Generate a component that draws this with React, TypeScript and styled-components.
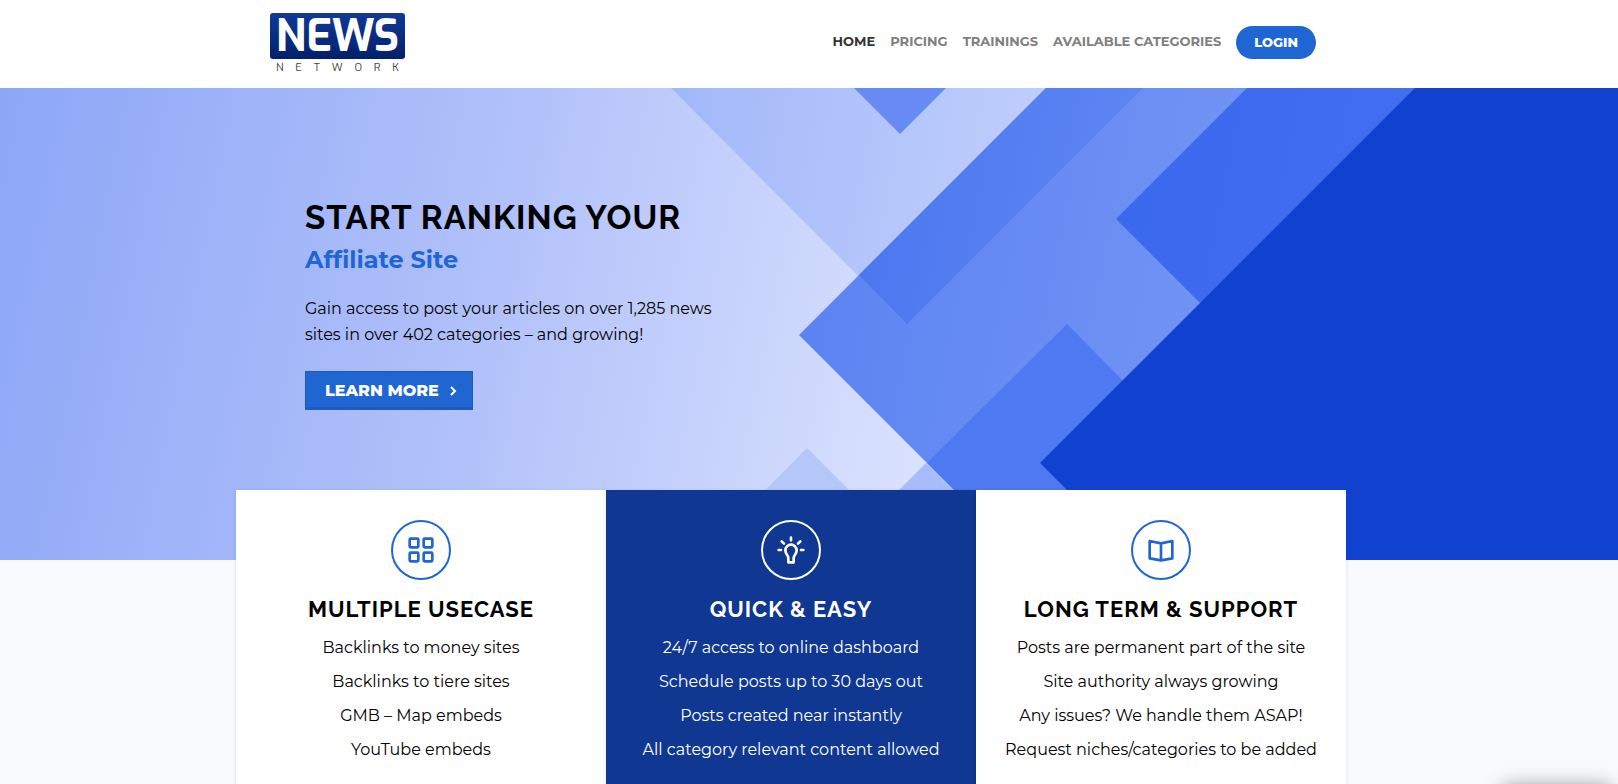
import React from 'react';
import styled, { createGlobalStyle, css } from 'styled-components';

const blue = '#2066d3';
const navy = '#103792';
const textFont = 'Montserrat, Inter, "Open Sans", sans-serif';
const titleFont = 'Raleway, Lato, "Open Sans", sans-serif';
const logoFont = 'Exo, "Open Sans", sans-serif';

const GlobalStyle = createGlobalStyle`
  *, *::before, *::after { box-sizing: border-box; }
  body {
    margin: 0;
    background: #f9fafc;
    color: #000;
    font-family: ${textFont};
    font-size: 16px;
    line-height: 26px;
  }
  h1, h2, p, ul { margin: 0; padding: 0; font-weight: inherit; }
  ul { list-style: none; }
  a { color: inherit; text-decoration: none; }
`;

const Header = styled.header`
  background: #fff;
  padding-right: 36px;
`;

const HeaderInner = styled.div`
  display: flex;
  align-items: center;
  justify-content: space-between;
  max-width: 1082px;
  height: 88px;
  margin: 0 auto;
  padding: 0 16px 4px 20px;
`;

const LogoLink = styled.a`
  display: block;
  width: 135px;
  padding-top: 4px;
  font-family: ${logoFont};
  text-align: center;
`;

const LogoPlate = styled.span`
  display: block;
  height: 46px;
  border-radius: 3px;
  background: linear-gradient(#103a97, #02206a);
  color: #fff;
  font-size: 43px;
  line-height: 48px;
  font-weight: 700;
`;

const LogoCaption = styled.span`
  display: flex;
  justify-content: space-between;
  padding: 2px 6px 0;
  color: #444;
  font-size: 11px;
  line-height: 14px;
`;

const NavList = styled.ul`
  display: flex;
  align-items: center;
  gap: 15px;
  font-size: 13px;
  line-height: 20px;
  font-weight: 700;
`;

const NavLink = styled.a<{ $active?: boolean }>`
  display: block;
  padding-bottom: 2px;
  color: ${p => (p.$active ? '#333' : '#808080')};
`;

const LoginButton = styled.button`
  display: block;
  height: 33px;
  padding: 0 18px;
  border: 0;
  border-radius: 17px;
  background: ${blue};
  color: #fff;
  font: 800 13px/33px ${textFont};
  cursor: pointer;
`;

const Hero = styled.section`
  position: relative;
  height: 472px;
  padding: 110px 36px 0 0;
  overflow: hidden;
`;

const HeroBackdrop = styled.svg`
  position: absolute;
  inset: 0;
  width: 100%;
  height: 100%;
`;

const HeroInner = styled.div`
  position: relative;
  max-width: 1080px;
  margin: 0 auto;
  padding-left: 54px;
`;

const HeroTitle = styled.h1`
  font: 700 33px/40px ${titleFont};
  letter-spacing: 1px;
`;

const HeroSubtitle = styled.h2`
  margin-top: 6px;
  color: ${blue};
  font-size: 24px;
  line-height: 32px;
  font-weight: 700;
`;

const HeroText = styled.p`
  max-width: 430px;
  margin-top: 20px;
`;

const LearnMore = styled.a`
  display: inline-flex;
  align-items: center;
  gap: 10px;
  height: 39px;
  margin-top: 23px;
  padding: 0 16px 0 20px;
  background: ${blue};
  box-shadow: inset 0 -3px 0 #1d5cbe, inset 0 0 0 1px #1d5cbe;
  color: #fff;
  font-weight: 800;
`;

const Features = styled.main`
  position: relative;
  margin-top: -70px;
  padding-right: 36px;
`;

const FeatureGrid = styled.div`
  display: grid;
  grid-template-columns: repeat(3, 1fr);
  max-width: 1110px;
  margin: 0 auto;
`;

const Card = styled.section<{ $dark?: boolean }>`
  display: flex;
  flex-direction: column;
  align-items: center;
  padding: 30px 15px 40px;
  background: #fff;
  text-align: center;
  box-shadow: 0 1px 4px rgba(0, 0, 0, 0.12);
  ${p =>
    p.$dark &&
    css`
      background: ${navy};
      color: #fff;
    `}
`;

const IconCircle = styled.span<{ $dark?: boolean }>`
  display: flex;
  align-items: center;
  justify-content: center;
  width: 60px;
  height: 60px;
  border: 2px solid currentColor;
  border-radius: 50%;
  color: ${p => (p.$dark ? '#fff' : blue)};
`;

const CardTitle = styled.h2`
  margin-top: 15px;
  font: 700 22px/28px ${titleFont};
  letter-spacing: 1px;
`;

const CardList = styled.ul`
  display: flex;
  flex-direction: column;
  gap: 8px;
  margin-top: 12px;
`;

const WidgetShadow = styled.aside`
  position: fixed;
  right: 6px;
  bottom: -63px;
  width: 110px;
  height: 60px;
  border-radius: 6px;
  box-shadow: 0 0 20px rgba(0, 0, 0, 0.45);
`;

const Logo = () => (
  <>
    <LogoPlate>NEWS</LogoPlate>
    <LogoCaption>
      {'NETWORK'.split('').map(letter => (
        <span key={letter}>{letter}</span>
      ))}
    </LogoCaption>
  </>
);

const Backdrop = () => (
  <HeroBackdrop viewBox="0 0 1618 472" preserveAspectRatio="xMidYMid slice" aria-hidden="true">
    <defs>
      <linearGradient id="sky" gradientUnits="userSpaceOnUse" x1="0" y1="0" x2="961" y2="192">
        <stop offset="0" stopColor="#8da7f7" />
        <stop offset="0.5" stopColor="#afbff9" />
        <stop offset="1" stopColor="#dae2fe" />
      </linearGradient>
      <linearGradient id="haze" gradientUnits="userSpaceOnUse" x1="680" y1="0" x2="1040" y2="72">
        <stop offset="0" stopColor="#a3b8f9" />
        <stop offset="1" stopColor="#bfcefb" />
      </linearGradient>
      <linearGradient id="mid" gradientUnits="userSpaceOnUse" x1="800" y1="200" x2="1180" y2="276">
        <stop offset="0" stopColor="#5b83f1" />
        <stop offset="1" stopColor="#7092f4" />
      </linearGradient>
      <linearGradient id="overlap" gradientUnits="userSpaceOnUse" x1="860" y1="180" x2="1120" y2="232">
        <stop offset="0" stopColor="#4c77ef" />
        <stop offset="1" stopColor="#5f86f3" />
      </linearGradient>
      <linearGradient id="bright" gradientUnits="userSpaceOnUse" x1="1116" y1="0" x2="1414" y2="60">
        <stop offset="0" stopColor="#3a68ee" />
        <stop offset="1" stopColor="#426ef0" />
      </linearGradient>
    </defs>
    <rect width="1618" height="472" fill="url(#sky)" />
    <polygon points="671,0 906,236 1142,0" fill="url(#haze)" />
    <polygon points="854,0 900,46 946,0" fill="#678af3" />
    <polygon points="807,360 695,472 919,472" fill="#b5c7f9" />
    <polygon points="926,375 829,472 1024,472" fill="#a7bcf8" />
    <polygon points="1046,0 799,247 1024,472 1618,472 1618,0" fill="url(#mid)" />
    <polygon points="1046,0 859,187 907,236 1143,0" fill="url(#overlap)" />
    <polygon points="1067,236 927,375 1024,472 1300,472" fill="#4f79f0" />
    <polygon points="1247,0 1116,131 1250,265 1450,0" fill="url(#bright)" />
    <polygon points="1415,0 1040,375 1137,472 1618,472 1618,0" fill="#1141cf" />
  </HeroBackdrop>
);

const GridIcon = () => (
  <svg width="26" height="26" viewBox="0 0 78 78" fill="none" stroke="currentColor" strokeWidth="8" aria-hidden="true">
    <rect x="5" y="5" width="26" height="26" rx="3" />
    <rect x="47" y="5" width="26" height="26" rx="3" />
    <rect x="5" y="47" width="26" height="26" rx="3" />
    <rect x="47" y="47" width="26" height="26" rx="3" />
  </svg>
);

const BulbIcon = () => (
  <svg width="28" height="28" viewBox="0 0 84 84" fill="none" stroke="currentColor" strokeWidth="8" strokeLinecap="round" strokeLinejoin="round" aria-hidden="true">
    <path d="M34 79V65C34 59 25 55 25 43a17 17 0 0 1 34 0C59 55 50 59 50 65V79Z" />
    <path d="M42 5v8M14 16l7 7M70 16l-7 7M5 42h7M72 42h7" />
  </svg>
);

const BookIcon = () => (
  <svg width="26" height="23" viewBox="0 0 78 69" fill="none" stroke="currentColor" strokeWidth="8" strokeLinejoin="round" aria-hidden="true">
    <path d="M5 6L39 13L73 6V58L39 64L5 58ZM39 13V64" />
  </svg>
);

const navItems = ['Home', 'Pricing', 'Trainings', 'Available Categories'];

const features = [
  {
    title: 'MULTIPLE USECASE',
    Icon: GridIcon,
    dark: false,
    items: ['Backlinks to money sites', 'Backlinks to tiere sites', 'GMB – Map embeds', 'YouTube embeds'],
  },
  {
    title: 'QUICK & EASY',
    Icon: BulbIcon,
    dark: true,
    items: [
      '24/7 access to online dashboard',
      'Schedule posts up to 30 days out',
      'Posts created near instantly',
      'All category relevant content allowed',
    ],
  },
  {
    title: 'LONG TERM & SUPPORT',
    Icon: BookIcon,
    dark: false,
    items: [
      'Posts are permanent part of the site',
      'Site authority always growing',
      'Any issues? We handle them ASAP!',
      'Request niches/categories to be added',
    ],
  },
];

export default function App() {
  return (
    <>
      <GlobalStyle />
      <Header>
        <HeaderInner>
          <LogoLink href="#home" aria-label="News Network">
            <Logo />
          </LogoLink>
          <nav>
            <NavList>
              {navItems.map((item, i) => (
                <li key={item}>
                  <NavLink href={`#${item.toLowerCase().replace(' ', '-')}`} $active={i === 0}>
                    {item.toUpperCase()}
                  </NavLink>
                </li>
              ))}
              <li>
                <LoginButton type="button">LOGIN</LoginButton>
              </li>
            </NavList>
          </nav>
        </HeaderInner>
      </Header>
      <Hero>
        <Backdrop />
        <HeroInner>
          <HeroTitle>START RANKING YOUR</HeroTitle>
          <HeroSubtitle>Affiliate Site</HeroSubtitle>
          <HeroText>
            Gain access to post your articles on over 1,285 news sites in over 402 categories – and growing!
          </HeroText>
          <LearnMore href="#learn-more">
            LEARN MORE
            <svg width="8" height="12" viewBox="0 0 8 12" fill="none" stroke="currentColor" strokeWidth="2" aria-hidden="true">
              <path d="M2 2l4 4l-4 4" />
            </svg>
          </LearnMore>
        </HeroInner>
      </Hero>
      <Features>
        <FeatureGrid>
          {features.map(({ title, Icon, dark, items }) => (
            <Card key={title} $dark={dark}>
              <IconCircle $dark={dark}>
                <Icon />
              </IconCircle>
              <CardTitle>{title}</CardTitle>
              <CardList>
                {items.map(text => (
                  <li key={text}>{text}</li>
                ))}
              </CardList>
            </Card>
          ))}
        </FeatureGrid>
      </Features>
      <WidgetShadow />
    </>
  );
}
